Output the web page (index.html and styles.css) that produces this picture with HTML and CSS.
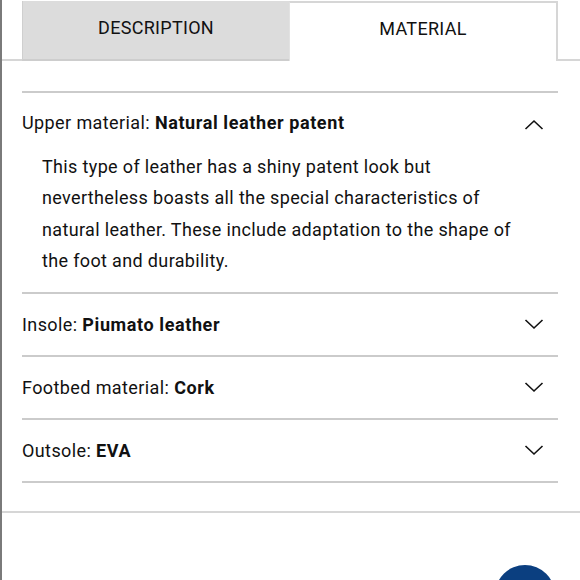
FILE: index.html
```html
<!DOCTYPE html>
<html>
<head>
<meta charset="utf-8">
<link rel="stylesheet" href="styles.css">
</head>
<body>
<div class="page">
  <div class="tabs">
    <div class="tab-spacer left"></div>
    <div class="tab inactive">DESCRIPTION</div>
    <div class="tab active">MATERIAL</div>
    <div class="tab-spacer right"></div>
  </div>
  <div class="panel">
    <div class="item open">
      <div class="item-head">
        <span>Upper material: <b>Natural leather patent</b></span>
        <svg class="chev up" width="20" height="11" viewBox="0 0 20 11"><path d="M1.5 10 L10 2 L18.5 10" fill="none" stroke="#111" stroke-width="1.6"/></svg>
      </div>
      <p class="item-body">This type of leather has a shiny patent look but nevertheless boasts all the special characteristics of natural leather. These include adaptation to the shape of the foot and durability.</p>
    </div>
    <div class="item">
      <div class="item-head">
        <span>Insole: <b>Piumato leather</b></span>
        <svg class="chev" width="20" height="11" viewBox="0 0 20 11"><path d="M1.5 1 L10 9 L18.5 1" fill="none" stroke="#111" stroke-width="1.6"/></svg>
      </div>
    </div>
    <div class="item">
      <div class="item-head">
        <span>Footbed material: <b>Cork</b></span>
        <svg class="chev" width="20" height="11" viewBox="0 0 20 11"><path d="M1.5 1 L10 9 L18.5 1" fill="none" stroke="#111" stroke-width="1.6"/></svg>
      </div>
    </div>
    <div class="item last">
      <div class="item-head">
        <span>Outsole: <b>EVA</b></span>
        <svg class="chev" width="20" height="11" viewBox="0 0 20 11"><path d="M1.5 1 L10 9 L18.5 1" fill="none" stroke="#111" stroke-width="1.6"/></svg>
      </div>
    </div>
  </div>
  <div class="footer">
    <div class="fab"></div>
  </div>
</div>
</body>
</html>
```

FILE: styles.css
```css
html, body {
  margin: 0;
  padding: 0;
  background: #fff;
}
body {
  font-family: Roboto, "Liberation Sans", sans-serif;
  color: #111;
}
.page {
  height: 580px;
  overflow: hidden;
  border-left: 2px solid #7a7a7a;
  box-sizing: border-box;
}
.tabs {
  display: flex;
  padding-top: 1px;
  height: 61px;
  box-sizing: border-box;
}
.tab-spacer {
  border-bottom: 2px solid #d6d6d6;
}
.tab-spacer.left { width: 20px; }
.tab-spacer.right { flex: 1; }
.tab {
  width: 267px;
  display: flex;
  align-items: center;
  justify-content: center;
  font-size: 18px;
  letter-spacing: 0.3px;
  box-sizing: border-box;
  padding-bottom: 5px;
}
.tab.inactive {
  background: #dcdcdc;
  border-left: 1px solid #cfcfcf;
  border-bottom: 2px solid #cdcdcd;
}
.tab.active {
  background: #fff;
  border-top: 2px solid #d6d6d6;
  border-left: 1px solid #e2e2e2;
  border-right: 2px solid #d6d6d6;
  width: 269px;
  padding-bottom: 7px;
}
.panel {
  padding: 30px 22px 0 20px;
}
.item {
  border-top: 2px solid #cbcbcb;
}
.item.last {
  border-bottom: 2px solid #cbcbcb;
}
.item-head {
  display: flex;
  align-items: center;
  justify-content: space-between;
  height: 61px;
  font-size: 18px;
  letter-spacing: 0.4px;
}
.item.open .item-head {
  height: 58px;
}
.item-head b {
  font-weight: 700;
  letter-spacing: 0.6px;
}
.chev {
  margin-right: 14px;
}
.chev.up {
  margin-top: 5px;
}
.item-body {
  margin: 0;
  padding: 0 30px 15px 20px;
  font-size: 18px;
  line-height: 31.4px;
  letter-spacing: 0.35px;
}
.footer {
  margin-top: 28px;
  border-top: 2px solid #d6d6d6;
  display: flex;
  justify-content: flex-end;
  padding-right: 25px;
}
.fab {
  margin-top: 52px;
  width: 60px;
  height: 60px;
  border-radius: 50%;
  background: #0b3f80;
}
```
